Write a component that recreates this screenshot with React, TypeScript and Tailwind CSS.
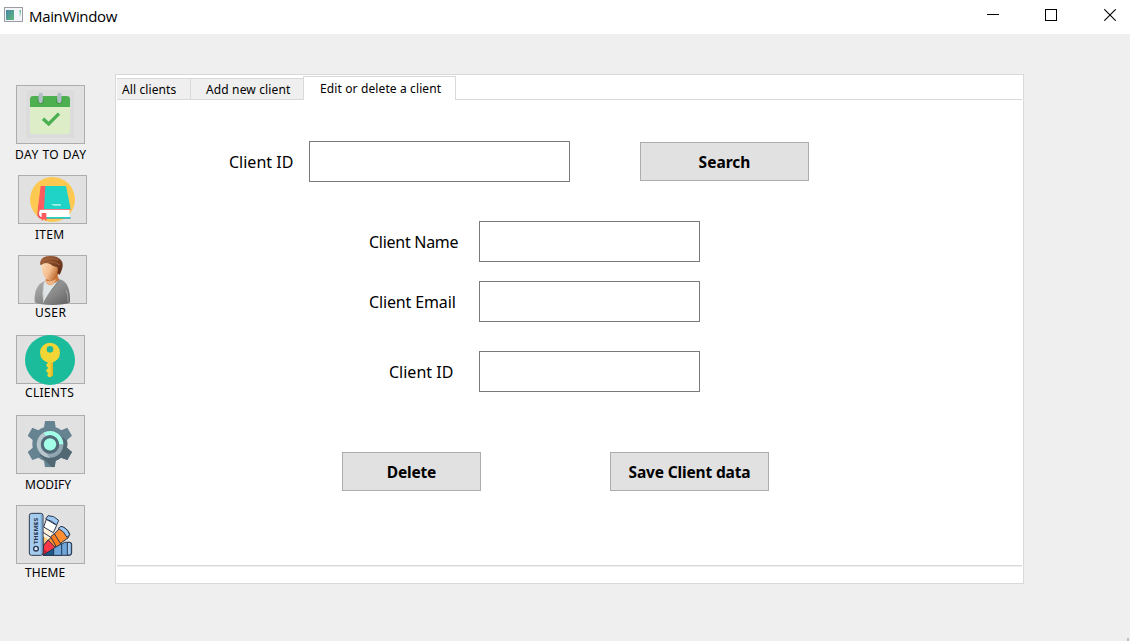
import type { ReactNode } from "react";

function AppIcon() {
  return (
    <svg width="19" height="15" viewBox="0 0 19 15">
      <defs>
        <linearGradient id="app" x1="0" y1="0" x2="1" y2="1">
          <stop offset="0" stopColor="#4a86a8" />
          <stop offset="1" stopColor="#5cb878" />
        </linearGradient>
        <linearGradient id="appSide" x1="0" y1="0" x2="0" y2="1">
          <stop offset="0" stopColor="#5cb890" />
          <stop offset="1" stopColor="#ffffff" />
        </linearGradient>
      </defs>
      <rect x="0.5" y="0.5" width="18" height="14" fill="#f4f5f8" stroke="#9a9da3" />
      <rect x="2" y="3" width="8" height="10" fill="url(#app)" />
      <rect x="11" y="3" width="6" height="10" fill="#f2f4fa" />
      <rect x="15.500" y="3" width="1.500" height="8" fill="url(#appSide)" />
    </svg>
  );
}

function CalendarIcon() {
  return (
    <svg className="block h-[57px] w-[67px] overflow-visible" viewBox="51 33 201 171">
      <rect x="78" y="45" width="144" height="144" fill="#dcdcdc" />
      <path d="M90 94h120v74q0 10-10 10H100q-10 0-10-10z" fill="#dcedc8" />
      <path d="M90 96V73q0-10 10-10h100q10 0 10 10v23z" fill="#4caf50" />
      <circle cx="122" cy="77" r="9" fill="#388e3c" />
      <circle cx="178" cy="77" r="9" fill="#388e3c" />
      <path d="M122 60v18M178 60v18" stroke="#b0bec5" strokeWidth="13" strokeLinecap="round" />
      <path d="M129 131l17 16 31-31" fill="none" stroke="#4caf50" strokeWidth="10" />
    </svg>
  );
}

function BookIcon() {
  return (
    <svg className="block h-[47px] w-[67px] overflow-visible" viewBox="57 33 201 141">
      <circle cx="157.500" cy="103.500" r="67.500" fill="#ffc850" />
      <path d="M133 63h61q4 0 5 4l13 65h-84z" fill="#1fd3c6" />
      <path d="M122 63h14l-4 69h-12q-6 2-8 12z" fill="#ff5a5f" />
      <path d="M114 138q3-6 10-6h87v5H127q-7 0-7 9t7 10h84v5h-86q-11 0-13-12z" fill="#f0505a" />
      <path d="M124 134h86q-5 11 0 22h-86q-7-1-7-11t7-11z" fill="#fff" />
      <path d="M139 156h73v5h-73z" fill="#1fd3c6" />
      <path d="M125 144h14v24l-7-6-7 6z" fill="#ff5a5f" />
      <path d="M155 117h27l1 3h-27zM159 121h24v2h-23z" fill="#a5eee5" />
    </svg>
  );
}

function UserIcon() {
  return (
    <svg className="block h-[47px] w-[67px] overflow-visible" viewBox="57 33 201 141">
      <defs>
        <linearGradient id="suit" x1="0" y1="0" x2="1" y2="1">
          <stop offset="0" stopColor="#b4b4b4" />
          <stop offset="0.6" stopColor="#858585" />
          <stop offset="1" stopColor="#5c5c5c" />
        </linearGradient>
        <linearGradient id="skin" x1="0" y1="0" x2="1" y2="0.5">
          <stop offset="0" stopColor="#ffdcb8" />
          <stop offset="0.55" stopColor="#f3bd8e" />
          <stop offset="1" stopColor="#b86428" />
        </linearGradient>
        <linearGradient id="hair" x1="0" y1="0" x2="1" y2="1">
          <stop offset="0" stopColor="#a9683f" />
          <stop offset="0.5" stopColor="#7e4525" />
          <stop offset="1" stopColor="#53240f" />
        </linearGradient>
      </defs>
      <path d="M104 172q-2-31 9-47 7-12 23-17l43-5q18 5 25 23 7 18 6 46-16 8-53 8t-53-8z" fill="url(#suit)" />
      <path d="M132 113l6-9 38-1-21 31-25 40q-4-26-1-52z" fill="#dfe5e6" />
      <path d="M137 103l31-21 10 23-25 16q-12-1-16-12z" fill="#c7743a" />
      <path d="M136 104q10 11 34-2l-13 19q-14 0-21-12z" fill="#eeb686" />
      <path d="M124 58q15-13 50 2 7 14 1 26-7 18-24 22-12-2-21-18-5-13-6-32z" fill="url(#skin)" />
      <path d="M120 57q0-18 20-23 27-5 41 9 12 13 4 32-3 10-7 15l-6-7q4-6 0-17-10 1-22-9-16-7-27 4z" fill="url(#hair)" />
      <path d="M127 51q16-16 48-7M138 54q18-9 42 6" fill="none" stroke="#b27145" strokeWidth="2" />
      <path d="M132 117q-6 27-1 51M199 136q7 18 5 35" fill="none" stroke="#bdbdbd" strokeWidth="2" />
      <path d="M181 107q-27 22-49 64" fill="none" stroke="#707070" strokeWidth="2" />
    </svg>
  );
}

function KeyIcon() {
  return (
    <svg className="block h-[47px] w-[67px] overflow-visible" viewBox="51 33 201 141">
      <circle cx="150" cy="105" r="75" fill="#1abc9c" />
      <path d="M141 108h18v42l-8 7-5-1-5-6 5-5-7-5v-6l6-5-6-6v-5l5-4z" fill="#f3d536" />
      <path d="M152 108h7v42l-7 6z" fill="#e9b928" />
      <path
        fillRule="evenodd"
        d="M150 53a30 30 0 1 0 0 60a30 30 0 1 0 0-60zM150 63a10 10 0 1 1 0 20a10 10 0 1 1 0-20z"
        fill="#f3d536"
      />
    </svg>
  );
}

function GearIcon() {
  return (
    <svg className="block h-[57px] w-[67px] overflow-visible" viewBox="51 33 201 171">
      <defs>
        <clipPath id="gear">
          <path d="M135 48h29l3 19q10 3 17 9l18-8 14 24-15 13q2 12 0 23l15 13-14 24-19-7q-7 6-16 9l-3 20h-29l-3-20q-9-3-16-9l-19 7-14-24 15-13q-2-11 0-23L83 92l14-24 18 8q7-6 17-9z" />
        </clipPath>
      </defs>
      <g clipPath="url(#gear)">
        <rect x="80" y="45" width="140" height="145" fill="#658391" />
        <path d="M181 92l40 30v68h-62l-39-39z" fill="#526873" />
      </g>
      <circle cx="150" cy="118" r="34" fill="none" stroke="#91a6b1" strokeWidth="12" />
      <path d="M150 158a40 40 0 0 1-17-76l5 11a28 28 0 0 0-1 50z" fill="#b8c6ce" />
      <path d="M131 83a40 40 0 0 1 59 35h-13a28 28 0 0 0-39-25z" fill="#a3ffe8" />
      <circle cx="150" cy="118" r="27" fill="#526b78" />
      <circle cx="150" cy="118" r="18.500" fill="#a3ffe8" />
    </svg>
  );
}

function ThemeIcon() {
  return (
    <svg className="block h-[57px] w-[67px] overflow-visible" viewBox="51 33 201 171">
      <g stroke="#29374f" strokeWidth="3" strokeLinejoin="round">
        <path d="M129 180V112l24 14-22 50z" fill="#ffcb7b" />
        <path d="M131 88l32 20-14 28-20-12z" fill="#fff0db" stroke="none" />
        <path d="M129 112l22 14" fill="none" />
        <path d="M139 73l31 18-10 22-29-17z" fill="#fff" />
        <path d="M137 72l7-10q18-1 32 14l-6 14q-14-13-33-18z" fill="#9dc9f2" />
        <path d="M130 181v-30l54-56q18 3 25 23l-5 11-74 52z" fill="#ff8d32" />
        <path d="M130 181v-28l14-18 24 25z" fill="#ff3848" />
        <path d="M130 181v-20l13 9z" fill="#c51f35" stroke="none" />
        <path d="M152 125l11-9 21 34-14 8z" fill="#ff7c1e" />
        <path d="M175 100l8-6q18 4 26 25l-8 8q-8-18-26-27z" fill="#9dc9f2" />
        <path d="M130 181l64-39h15q6 0 6 6v26q0 7-7 7z" fill="#70a7da" />
        <path d="M130 181l31-21v21z" fill="#185a89" />
        <path d="M161 160l24-14v35h-24z" fill="#70a7da" />
        <path d="M202 142h6q6 0 6 6v26q0 6-6 6h-6z" fill="#9dc9f2" />
      </g>
      <rect x="88" y="55" width="41" height="126" rx="7" fill="#a5cbed" stroke="#29374f" strokeWidth="3" />
      <path d="M124 58v119" stroke="#78add9" strokeWidth="4" />
      <circle cx="108" cy="161" r="7" fill="#dcecfa" stroke="#29374f" strokeWidth="4" />
      <text
        x="0"
        y="0"
        transform="translate(115 148) rotate(-90)"
        textLength="80"
        lengthAdjust="spacingAndGlyphs"
        fontFamily="Noto Sans, sans-serif"
        fontSize="18"
        fontWeight="700"
        fill="#29374f"
      >
        THEMES
      </text>
    </svg>
  );
}

type NavProps = { icon: ReactNode; label: string; block: string; button: string; text: string };

function NavItem({ icon, label, block, button, text }: NavProps) {
  return (
    <div className={`flex flex-col items-start ${block}`}>
      <button className={`w-[69px] shrink-0 border border-[#adadad] bg-[#e1e1e1] ${button}`}>{icon}</button>
      <span className={`whitespace-nowrap text-[12px] leading-4 ${text}`}>{label}</span>
    </div>
  );
}

const navItems: NavProps[] = [
  { icon: <CalendarIcon />, label: "DAY TO DAY", block: "h-[90px]", button: "ml-4 h-[59px]", text: "ml-[15px] mt-[3px] tracking-[0.5px]" },
  { icon: <BookIcon />, label: "ITEM", block: "h-20", button: "ml-[18px] h-[49px]", text: "ml-[35px] mt-[3px] tracking-[0.3px]" },
  { icon: <UserIcon />, label: "USER", block: "h-20", button: "ml-[18px] h-[49px]", text: "ml-[35px] mt-[1px] tracking-[0.5px]" },
  { icon: <KeyIcon />, label: "CLIENTS", block: "h-20", button: "ml-4 h-[49px]", text: "ml-[25px] mt-[1px] tracking-[0.3px]" },
  { icon: <GearIcon />, label: "MODIFY", block: "h-[90px]", button: "ml-4 h-[59px]", text: "ml-[25px] mt-[3px]" },
  { icon: <ThemeIcon />, label: "THEME", block: "h-[90px]", button: "ml-4 h-[59px]", text: "ml-[25px] mt-[1px] tracking-[0.1px]" },
];

type FieldProps = { label: string; row?: string; labelStyle: string; inputWidth: string };

function Field({ label, row = "", labelStyle, inputWidth }: FieldProps) {
  return (
    <div className={`flex h-[41px] items-center ${row}`}>
      <label className={`shrink-0 whitespace-nowrap text-[16px] leading-5 ${labelStyle}`}>{label}</label>
      <input aria-label={label} className={`h-[41px] border border-[#7a7a7a] bg-white px-2 outline-none ${inputWidth}`} />
    </div>
  );
}

function ActionButton({ children, size }: { children: ReactNode; size: string }) {
  return (
    <button className={`h-[39px] shrink-0 whitespace-nowrap border border-[#adadad] bg-[#e1e1e1] pt-[3px] font-bold ${size}`}>
      {children}
    </button>
  );
}

export default function App() {
  return (
    <div className="flex h-[641px] w-[1130px] flex-col overflow-hidden bg-[#efefef] font-['Noto_Sans',sans-serif] text-black">
      <header className="flex h-[34px] shrink-0 items-start bg-white">
        <div className="ml-1 mt-[7px]"><AppIcon /></div>
        <h1 className="ml-[6px] mt-[6px] font-['Open_Sans',sans-serif] text-[15px] leading-5 tracking-[-0.35px]">MainWindow</h1>
        <div className="ml-auto mr-[14px] mt-[9px] flex">
          <svg className="mr-[46px]" width="12" height="12" shapeRendering="crispEdges"><path d="M0 5.500h12" stroke="#000" /></svg>
          <svg className="mr-[47px]" width="12" height="12" shapeRendering="crispEdges"><rect x="0.500" y="0.500" width="11" height="11" fill="none" stroke="#000" /></svg>
          <svg width="12" height="12"><path d="M0.300.3l11.400 11.400M11.700.3L.3 11.700" stroke="#000" strokeWidth="1.100" /></svg>
        </div>
      </header>
      <div className="flex min-h-0 flex-1">
        <nav className="w-[115px] shrink-0 pt-[51px]">
          {navItems.map((item) => (
            <NavItem key={item.label} {...item} />
          ))}
        </nav>
        <main className="mt-10 flex h-[510px] w-[909px] shrink-0 flex-col border border-[#d9d9d9] bg-white">
          <div className="flex h-[25px] shrink-0 items-end pl-px pr-px text-[12px]">
            <div className="h-[22px] w-[73px] shrink-0 whitespace-nowrap border-y border-[#d9d9d9] bg-[#efefef] pl-[5px] leading-[21px] tracking-[0.1px]">All clients</div>
            <div className="h-[22px] w-[113px] shrink-0 whitespace-nowrap border-y border-l border-[#d9d9d9] bg-[#efefef] pl-[15px] leading-[21px] tracking-[0.14px]">Add new client</div>
            <div className="h-[24px] w-[153px] shrink-0 whitespace-nowrap border-x border-t border-[#d9d9d9] pl-[16px] leading-[23px] tracking-[0.12px]">Edit or delete a client</div>
            <div className="h-px flex-1 bg-[#d9d9d9]" />
          </div>
          <form className="flex h-[465px] shrink-0 flex-col items-start" onSubmit={(e) => e.preventDefault()}>
            <div className="ml-[113px] mt-[41px] flex items-center">
              <Field label="Client ID" labelStyle="w-[80px]" inputWidth="w-[261px]" />
              <div className="ml-[70px]"><ActionButton size="w-[169px] text-[15.5px]">Search</ActionButton></div>
            </div>
            <Field label="Client Name" row="ml-[253px] mt-[39px]" labelStyle="w-[110px] tracking-[-0.28px]" inputWidth="w-[221px]" />
            <Field label="Client Email" row="ml-[253px] mt-[19px]" labelStyle="w-[110px] tracking-[-0.14px]" inputWidth="w-[221px]" />
            <Field label="Client ID" row="ml-[273px] mt-[29px]" labelStyle="w-[90px]" inputWidth="w-[221px]" />
            <div className="ml-[226px] mt-[60px] flex gap-[129px]">
              <ActionButton size="w-[139px] text-[15.5px] tracking-[-0.2px]">Delete</ActionButton>
              <ActionButton size="w-[159px] text-[15.5px] tracking-[-0.15px]">Save Client data</ActionButton>
            </div>
          </form>
          <div className="mx-px h-[2px] shrink-0 border-t border-[#d9d9d9] bg-[#eeeeee]" />
        </main>
        <div className="mb-0 ml-auto mr-px mt-auto h-[3px] w-[2px] bg-[#bfbfbf]" />
      </div>
    </div>
  );
}
